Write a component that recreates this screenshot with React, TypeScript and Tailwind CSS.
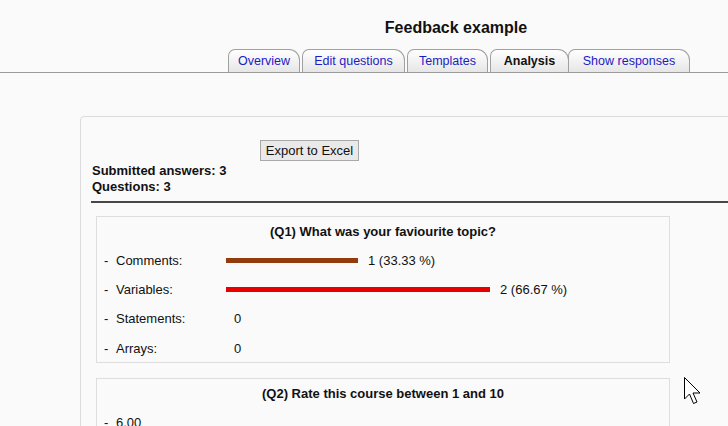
import React from "react";

const tabs = [
    { name: "Overview", w: "w-[72px]", active: false },
    { name: "Edit questions", w: "w-[103px]", active: false },
    { name: "Templates", w: "w-[81px]", active: false },
    { name: "Analysis", w: "w-[79px]", active: true },
    { name: "Show responses", w: "w-[122px]", active: false },
];

const q1 = [
    { label: "Comments:", bar: 132, color: "bg-[#933b0c]", value: "1 (33.33 %)" },
    { label: "Variables:", bar: 264, color: "bg-[#e80000]", value: "2 (66.67 %)" },
    { label: "Statements:", bar: 0, color: "", value: "0" },
    { label: "Arrays:", bar: 0, color: "", value: "0" },
];

function Cursor() {
    return (
        <svg
            className="absolute left-[683px] top-[376px]"
            width="20"
            height="30"
            viewBox="0 0 20 30"
        >
            <path
                d="M1.5 1.5 L1.5 23 L6.5 18 L10.5 27.5 L14 26 L10 17 L17 17 Z"
                fill="#fff"
                stroke="#000"
                strokeWidth="1"
                strokeLinejoin="miter"
            />
        </svg>
    );
}

export default function App() {
    return (
        <div className="relative w-[728px] h-[426px] overflow-hidden bg-[#fafafa] text-[#111] font-['Liberation_Sans',Arial,sans-serif]">
            {/* Heading */}
            <div className="w-[912px] h-[49px] pt-[19px] text-center text-[16px] font-bold leading-[18px]">
                Feedback example
            </div>

            {/* Tabs */}
            <div className="flex items-end h-[24px] border-b border-[#9a9a9a] pl-[228px]">
                {tabs.map((tab, i) => (
                    <div
                        key={tab.name}
                        className={`${tab.w} h-[23px] flex items-center justify-center border border-b-0 border-[#a0a0a0] rounded-tl-[7px] rounded-tr-[11px] bg-gradient-to-b from-white to-[#e6e6e6] text-[12.5px] ${
                            i === 4 ? "-ml-[1px]" : i > 0 ? "ml-[2px]" : ""
                        } ${
                            tab.active
                                ? "font-bold text-[#111]"
                                : "text-[#1c1cc4]"
                        }`}
                    >
                        {tab.name}
                    </div>
                ))}
            </div>

            {/* Main panel */}
            <div className="ml-[80px] mt-[43px] w-[752px] h-[400px] border border-[#dcdcdc] rounded-tl-[4px] pl-[10px] pt-[21px]">
                <button className="ml-[169px] h-[21px] w-[99px] border border-[#a8a8a8] bg-[#e9e9e9] text-[13px] leading-none">
                    Export to Excel
                </button>
                <div className="mt-[1px] text-[13px] font-bold leading-[16px] pl-[1px]">
                    <div>Submitted answers: 3</div>
                    <div>Questions: 3</div>
                </div>
                <div className="mt-[6px] h-[2px] bg-[#474747]" />

                {/* Q1 */}
                <div className="ml-[5px] mt-[13px] w-[574px] h-[147px] border border-[#dedede] pt-[6px] text-[13px]">
                    <div className="text-center font-bold leading-[17px]">
                        (Q1) What was your faviourite topic?
                    </div>
                    <div className="mt-[6px] flex flex-col">
                        {q1.map((row) => (
                            <div key={row.label} className="flex items-center h-[29.3px] pl-[7px]">
                                <span className="w-[12px]">-</span>
                                <span className="w-[110px]">{row.label}</span>
                                {row.bar > 0 ? (
                                    <>
                                        <span
                                            className={`h-[5px] ${row.color}`}
                                            style={{ width: row.bar }}
                                        />
                                        <span className="ml-[10px]">{row.value}</span>
                                    </>
                                ) : (
                                    <span className="ml-[8px]">{row.value}</span>
                                )}
                            </div>
                        ))}
                    </div>
                </div>

                {/* Q2 */}
                <div className="ml-[5px] mt-[15px] w-[574px] h-[80px] border border-[#dedede] pt-[6px] text-[13px]">
                    <div className="text-center font-bold leading-[17px]">
                        (Q2) Rate this course between 1 and 10
                    </div>
                    <div className="flex items-center h-[29px] mt-[6px] pl-[7px]">
                        <span className="w-[12px]">-</span>
                        <span>6.00</span>
                    </div>
                </div>
            </div>

            <Cursor />
        </div>
    );
}
